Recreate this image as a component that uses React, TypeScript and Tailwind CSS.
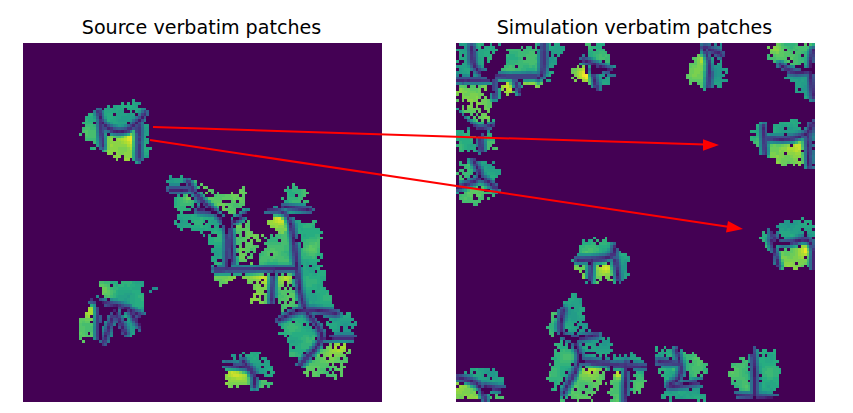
const CELL = 359 / 128;
const FONT = "font-['DejaVu_Sans',sans-serif]";

type Lobe = { pts: number[]; v: number; hot?: number[]; p?: number };
type Group = { ox: number; oy: number; lobes: Lobe[]; veins: number[][] };

const VIRIDIS = [
  [68, 1, 84], [71, 44, 122], [59, 81, 139], [44, 113, 142], [33, 144, 141],
  [39, 173, 129], [92, 200, 99], [170, 220, 50], [253, 231, 37],
];

function viridis(t: number) {
  const x = Math.max(0, Math.min(0.999, t)) * (VIRIDIS.length - 1);
  const i = Math.floor(x);
  const f = x - i;
  const c = VIRIDIS[i].map((a, k) => Math.round(a + (VIRIDIS[i + 1][k] - a) * f));
  return `rgb(${c[0]},${c[1]},${c[2]})`;
}

function hash(i: number, j: number, k: number) {
  const s = Math.sin(i * 127.1 + j * 311.7 + k * 74.7) * 43758.5453;
  return s - Math.floor(s);
}

function inside(x: number, y: number, p: number[]) {
  let hit = false;
  for (let a = 0, b = p.length - 2; a < p.length; b = a, a += 2) {
    if (p[a + 1] > y !== p[b + 1] > y && x < ((p[b] - p[a]) * (y - p[a + 1])) / (p[b + 1] - p[a + 1]) + p[a]) hit = !hit;
  }
  return hit;
}

function lineDist(x: number, y: number, l: number[]) {
  let best = 1e9;
  for (let a = 0; a + 3 < l.length; a += 2) {
    const dx = l[a + 2] - l[a];
    const dy = l[a + 3] - l[a + 1];
    const t = Math.max(0, Math.min(1, ((x - l[a]) * dx + (y - l[a + 1]) * dy) / (dx * dx + dy * dy || 1)));
    best = Math.min(best, Math.hypot(x - l[a] - t * dx, y - l[a + 1] - t * dy));
  }
  return best;
}

// rounds the corners of a vein so it curves like the picture
function smooth(l: number[], rounds = 2) {
  let cur = l;
  for (let r = 0; r < rounds; r++) {
    const next = [cur[0], cur[1]];
    for (let a = 0; a + 3 < cur.length; a += 2) {
      next.push(cur[a] * 0.75 + cur[a + 2] * 0.25, cur[a + 1] * 0.75 + cur[a + 3] * 0.25);
      next.push(cur[a] * 0.25 + cur[a + 2] * 0.75, cur[a + 1] * 0.25 + cur[a + 3] * 0.75);
    }
    next.push(cur[cur.length - 2], cur[cur.length - 1]);
    cur = next;
  }
  return cur;
}

// all coordinates are read off 3x crops, so they get divided by 3 below
const LEFT: Group[] = [
  {
    ox: 70, oy: 90,
    lobes: [
      { pts: [30, 128, 48, 72, 85, 68, 95, 110, 100, 170, 85, 180, 50, 150], v: 0.64 },
      { pts: [85, 65, 150, 38, 212, 38, 225, 72, 205, 100, 170, 118, 130, 118, 100, 100], v: 0.56 },
      { pts: [95, 130, 130, 130, 175, 130, 200, 125, 205, 205, 120, 200, 85, 178], v: 0.78, hot: [190, 150, 24, 0.16], p: 0.02 },
      { pts: [205, 100, 232, 105, 238, 205, 205, 205], v: 0.55 },
    ],
    veins: [[85, 65, 95, 100, 130, 125, 170, 125, 210, 90, 225, 70], [92, 100, 98, 170], [205, 110, 205, 205]],
  },
  {
    ox: 150, oy: 165,
    lobes: [
      { pts: [50, 35, 100, 30, 100, 70, 60, 72], v: 0.52 },
      { pts: [70, 80, 115, 75, 135, 105, 140, 135, 80, 150], v: 0.58, hot: [115, 90, 18, 0.22] },
      { pts: [115, 45, 140, 45, 215, 90, 290, 65, 285, 135, 240, 150, 180, 120, 140, 80], v: 0.72, p: 0.2 },
      { pts: [75, 170, 100, 150, 165, 145, 205, 170, 225, 230, 225, 310, 195, 310, 180, 210, 120, 190, 75, 195], v: 0.58, p: 0.14 },
      { pts: [250, 175, 295, 165, 300, 205, 335, 205, 310, 280, 305, 295, 250, 295, 248, 240], v: 0.72, p: 0.17 },
      { pts: [320, 300, 350, 220, 385, 205, 425, 205, 435, 300, 360, 310], v: 0.66, p: 0.02 },
      { pts: [355, 150, 370, 135, 410, 145, 415, 205, 385, 200, 355, 185], v: 0.76, hot: [400, 155, 18, 0.2] },
      { pts: [400, 115, 410, 65, 460, 65, 480, 135, 410, 135], v: 0.64 },
      { pts: [435, 165, 490, 170, 515, 195, 510, 280, 525, 345, 555, 435, 480, 440, 455, 430, 445, 310, 455, 240], v: 0.58, p: 0.08, hot: [490, 240, 25, 0.12] },
      { pts: [195, 325, 290, 320, 340, 320, 355, 340, 355, 410, 295, 415, 320, 380, 290, 345, 250, 345, 195, 385], v: 0.76, hot: [335, 330, 22, 0.14], p: 0.14 },
      { pts: [385, 325, 435, 325, 440, 420, 400, 440, 385, 415, 375, 400], v: 0.68, hot: [410, 340, 18, 0.2], p: 0.14 },
      { pts: [385, 470, 420, 450, 470, 450, 500, 480, 520, 515, 450, 590, 420, 580, 415, 520, 385, 510], v: 0.6 },
      { pts: [520, 470, 560, 445, 600, 450, 622, 480, 605, 515, 545, 510], v: 0.54, p: 0.14 },
      { pts: [460, 600, 530, 535, 600, 535, 590, 585, 570, 635, 470, 630], v: 0.7, hot: [565, 540, 26, 0.16], p: 0.12 },
      { pts: [228, 580, 280, 565, 320, 560, 375, 605, 365, 640, 310, 610, 270, 590], v: 0.54, p: 0.12 },
      { pts: [228, 610, 290, 610, 305, 635, 305, 665, 228, 665], v: 0.78, hot: [260, 615, 22, 0.1], p: 0.01 },
      { pts: [320, 650, 365, 650, 365, 665, 315, 665], v: 0.68, p: 0.01 },
      { pts: [4, 366, 12, 366, 12, 382, 4, 382], v: 0.45, p: 0 },
      { pts: [13, 185, 21, 185, 21, 192, 13, 192], v: 0.75, p: 0 },
    ],
    veins: [
      [115, 50, 145, 100, 195, 140, 235, 180, 232, 310],
      [145, 135, 195, 140],
      [235, 180, 290, 145],
      [60, 75, 115, 75],
      [195, 315, 440, 312],
      [370, 315, 365, 410],
      [350, 135, 410, 140, 430, 200, 440, 310, 455, 420, 500, 480, 525, 520, 450, 600],
      [385, 465, 455, 430, 560, 445],
      [525, 520, 610, 520],
      [400, 125, 480, 135],
      [240, 175, 248, 290],
      [280, 590, 315, 630, 312, 665],
      [228, 600, 300, 610],
    ],
  },
  {
    ox: 70, oy: 275,
    lobes: [
      { pts: [90, 20, 220, 20, 215, 120, 170, 90, 120, 85, 90, 60], v: 0.58, hot: [100, 40, 22, 0.18], p: 0.04 },
      { pts: [15, 175, 35, 120, 65, 85, 80, 120, 75, 190, 40, 195], v: 0.7, hot: [70, 110, 24, 0.12], p: 0.08 },
      { pts: [100, 210, 115, 130, 130, 125, 125, 190], v: 0.58 },
      { pts: [140, 115, 195, 130, 200, 180, 170, 180], v: 0.54 },
    ],
    veins: [[60, 75, 110, 85, 160, 95, 215, 125], [85, 85, 85, 190], [135, 105, 100, 205], [135, 105, 165, 175], [175, 100, 215, 160]],
  },
];

const RIGHT: Group[] = [
  {
    ox: 450, oy: 40,
    lobes: [
      { pts: [18, 10, 60, 10, 65, 90, 85, 120, 18, 120], v: 0.55, p: 0.14 },
      { pts: [85, 10, 150, 10, 120, 70, 80, 90, 65, 50], v: 0.58, p: 0.12 },
      { pts: [180, 25, 270, 10, 280, 60, 260, 110, 150, 110], v: 0.64, p: 0.08 },
      { pts: [290, 10, 355, 10, 310, 80, 300, 125, 280, 100], v: 0.54, p: 0.06 },
      { pts: [18, 125, 115, 125, 100, 160, 50, 185, 18, 185], v: 0.76, p: 0.18 },
      { pts: [135, 125, 195, 125, 200, 160, 150, 165], v: 0.76, hot: [180, 140, 16, 0.2], p: 0.15 },
      { pts: [225, 125, 280, 125, 255, 140, 225, 140], v: 0.76 },
      { pts: [420, 10, 460, 10, 490, 80, 400, 60], v: 0.62, p: 0.06 },
      { pts: [365, 80, 405, 80, 430, 135, 385, 125, 365, 110], v: 0.76, hot: [410, 105, 16, 0.18] },
      { pts: [445, 105, 490, 110, 475, 135, 445, 145], v: 0.54 },
      { pts: [30, 205, 80, 170, 130, 170, 120, 230, 130, 255, 90, 260, 50, 220], v: 0.74, p: 0.28 },
      { pts: [18, 260, 60, 280, 90, 330, 20, 335], v: 0.6, p: 0.06 },
      { pts: [100, 290, 135, 280, 135, 330, 100, 330], v: 0.64, p: 0.08 },
      { pts: [30, 370, 70, 365, 70, 410, 40, 425, 18, 410], v: 0.64, p: 0.14 },
      { pts: [95, 365, 130, 365, 150, 400, 130, 430, 100, 400], v: 0.54, p: 0.05 },
      { pts: [20, 450, 70, 420, 130, 450, 150, 455, 75, 495, 25, 485], v: 0.68, p: 0.16 },
    ],
    veins: [
      [65, 20, 70, 90, 130, 110, 260, 110],
      [280, 15, 280, 100, 265, 115],
      [18, 122, 120, 120],
      [135, 115, 135, 170],
      [195, 125, 210, 160],
      [400, 60, 490, 95],
      [425, 90, 440, 145],
      [18, 220, 80, 270, 130, 255],
      [90, 270, 95, 330],
      [70, 360, 95, 410, 75, 425, 18, 445],
      [90, 410, 140, 445],
    ],
  },
  {
    ox: 650, oy: 40,
    lobes: [
      { pts: [110, 120, 130, 50, 160, 35, 180, 60, 170, 140, 130, 130], v: 0.72, hot: [165, 60, 18, 0.16], p: 0.07 },
      { pts: [200, 60, 225, 70, 225, 130, 195, 150, 190, 100], v: 0.52 },
      { pts: [160, 10, 220, 10, 215, 40, 170, 30], v: 0.46 },
      { pts: [365, 15, 430, 10, 495, 10, 480, 70, 420, 85, 380, 70, 355, 60], v: 0.66, hot: [375, 30, 18, 0.13], p: 0.06 },
      { pts: [410, 110, 440, 100, 490, 110, 490, 178, 460, 170], v: 0.54, p: 0.07 },
      { pts: [305, 290, 320, 260, 340, 260, 350, 300, 345, 340, 320, 325], v: 0.64, p: 0.03 },
      { pts: [355, 255, 410, 240, 450, 240, 465, 270, 430, 290, 370, 290], v: 0.56, p: 0.04 },
      { pts: [355, 310, 400, 305, 465, 295, 470, 350, 460, 378, 400, 378, 360, 350], v: 0.77, hot: [452, 320, 18, 0.14], p: 0.03 },
      { pts: [475, 260, 495, 250, 495, 380, 480, 378], v: 0.4 },
      { pts: [325, 600, 340, 570, 365, 590, 355, 635], v: 0.62, p: 0.05 },
      { pts: [385, 550, 430, 540, 495, 540, 495, 590, 440, 600, 385, 590], v: 0.54, p: 0.06 },
      { pts: [380, 630, 460, 615, 490, 610, 485, 680, 400, 685, 380, 660], v: 0.77, hot: [475, 630, 16, 0.16], p: 0.04 },
    ],
    veins: [
      [160, 25, 180, 60, 175, 140],
      [165, 22, 215, 45],
      [390, 75, 430, 100, 495, 90],
      [490, 30, 480, 80, 490, 170],
      [340, 260, 345, 340],
      [350, 295, 420, 300, 475, 280, 490, 250],
      [470, 280, 475, 378],
      [365, 560, 370, 600, 400, 615, 490, 590, 490, 700],
      [365, 600, 385, 680],
    ],
  },
  {
    ox: 450, oy: 230,
    lobes: [
      { pts: [380, 60, 400, 30, 470, 30, 495, 55, 470, 80, 385, 85], v: 0.58, hot: [430, 65, 25, 0.08], p: 0.05 },
      { pts: [365, 100, 405, 100, 410, 150, 385, 125], v: 0.78, p: 0.06 },
      { pts: [430, 100, 490, 100, 490, 155, 430, 155], v: 0.75, hot: [470, 115, 16, 0.12], p: 0.06 },
      { pts: [505, 55, 535, 75, 535, 145, 505, 150], v: 0.54, p: 0.08 },
      { pts: [330, 240, 365, 190, 395, 200, 415, 300, 370, 310, 340, 300], v: 0.54, p: 0.1 },
      { pts: [295, 290, 310, 250, 325, 300, 305, 320], v: 0.66 },
      { pts: [385, 345, 430, 315, 480, 325, 490, 350, 470, 395, 420, 390], v: 0.54, p: 0.1 },
      { pts: [320, 335, 350, 340, 380, 385, 350, 435, 320, 480, 290, 450], v: 0.62, p: 0.03 },
      { pts: [340, 480, 390, 410, 470, 410, 465, 455, 420, 510, 340, 510], v: 0.7, hot: [430, 415, 24, 0.14], p: 0.12 },
      { pts: [490, 385, 550, 370, 590, 400, 490, 400], v: 0.54, p: 0.06 },
      { pts: [490, 430, 525, 420, 520, 510, 475, 510], v: 0.68, hot: [510, 430, 14, 0.2], p: 0.05 },
      { pts: [550, 430, 590, 430, 570, 490, 540, 490], v: 0.66, p: 0.05 },
      { pts: [620, 350, 670, 360, 690, 400, 700, 450, 640, 465, 625, 400], v: 0.58, hot: [680, 405, 14, 0.2], p: 0.06 },
      { pts: [690, 370, 740, 365, 775, 420, 720, 450, 705, 430], v: 0.62, hot: [745, 385, 18, 0.12], p: 0.03 },
      { pts: [640, 480, 750, 470, 765, 510, 640, 510], v: 0.56, p: 0.12 },
      { pts: [840, 440, 850, 395, 900, 380, 905, 500, 870, 495], v: 0.66, p: 0.03 },
      { pts: [925, 350, 975, 365, 990, 420, 975, 490, 925, 500, 925, 430], v: 0.6, p: 0.05 },
      { pts: [18, 455, 65, 415, 130, 410, 165, 460, 140, 470, 100, 460], v: 0.54, p: 0.08 },
      { pts: [18, 460, 80, 460, 95, 510, 18, 510], v: 0.78, p: 0.01 },
      { pts: [105, 500, 155, 495, 155, 510, 105, 510], v: 0.7 },
      { pts: [18, 245, 23, 245, 23, 262, 18, 262], v: 0.45, p: 0 },
    ],
    veins: [
      [905, 340, 915, 420, 915, 510],
      [850, 495, 915, 500, 985, 505],
      [340, 240, 325, 310, 370, 330, 440, 315],
      [375, 340, 395, 390, 340, 490],
      [395, 395, 475, 400],
      [530, 400, 525, 510],
      [480, 405, 590, 410],
      [625, 395, 690, 400],
      [680, 360, 700, 440, 640, 475, 755, 455],
      [380, 90, 490, 85, 495, 50],
      [425, 90, 420, 155],
      [495, 90, 505, 150],
      [18, 440, 90, 460, 105, 510],
      [105, 470, 165, 480],
    ],
  },
];

const NEAR = [[4, 0], [-4, 0], [0, 4], [0, -4], [3, 3], [-3, 3], [3, -3], [-3, -3]];

function buildCells(groups: Group[], left: number, top: number, seed: number) {
  const scaled = groups.map((g) => {
    const map = (p: number[]) => p.map((n, k) => (k % 2 === 0 ? g.ox + n / 3 - left : g.oy + n / 3 - top));
    return { lobes: g.lobes.map((l) => ({ ...l, pts: map(l.pts), hot: l.hot && [g.ox + l.hot[0] / 3 - left, g.oy + l.hot[1] / 3 - top, (l.hot[2] / 3) * 1.3, l.hot[3]] })), veins: g.veins.map((v) => smooth(map(v))) };
  });
  const allLobes = scaled.flatMap((g) => g.lobes);
  const allVeins = scaled.flatMap((g) => g.veins);
  const paths = new Map<string, string>();
  for (let j = 0; j < 128; j++) {
    for (let i = 0; i < 128; i++) {
      const x = (i + 0.5) * CELL;
      const y = (j + 0.5) * CELL;
      const jx = x + (hash(i, j, seed) - 0.5) * 5;
      const jy = y + (hash(i, j, seed + 1) - 0.5) * 5;
      let d = 1e9;
      for (const v of allVeins) d = Math.min(d, lineDist(x, y, v));
      let lobe = allLobes.find((l) => inside(jx, jy, l.pts));
      let filled = false;
      if (!lobe && d < 5) {
        // the gap between a lobe and its vein stays painted
        lobe = allLobes.find((l) => NEAR.some(([ax, ay]) => inside(x + ax, y + ay, l.pts)));
        filled = true;
      }
      if (!lobe) continue;
      if (!filled && d > 4 && hash(i, j, seed + 2) < (lobe.p ?? 0.07)) continue;
      let v = lobe.v + 0.03;
      if (lobe.hot) v += lobe.hot[3] * Math.exp(-((x - lobe.hot[0]) ** 2 + (y - lobe.hot[1]) ** 2) / lobe.hot[2] ** 2);
      v += Math.sin(x * 0.17 + seed) * Math.cos(y * 0.21) * 0.045 + (hash(i, j, seed + 3) - 0.5) * 0.02;
      const ramp = Math.min(1, d / 6.5);
      v = 0.07 + (v - 0.07) * ramp;
      const fill = viridis(Math.round(v * 40) / 40);
      paths.set(fill, (paths.get(fill) ?? "") + `M${(i * CELL).toFixed(2)} ${(j * CELL).toFixed(2)}h${CELL.toFixed(2)}v${CELL.toFixed(2)}h-${CELL.toFixed(2)}z`);
    }
  }
  return [...paths.entries()];
}

function Heatmap({ title, cells }: { title: string; cells: [string, string][] }) {
  return (
    <div className="flex w-[359px] flex-col items-center">
      <h2 className={`h-[32px] pr-[2px] text-[19.1px] leading-[34px] text-black ${FONT}`}>{title}</h2>
      <svg width="359" height="359" viewBox="0 0 359 359" className="block bg-[#440154]" shapeRendering="crispEdges">
        {cells.map(([fill, d]) => (
          <path key={fill} d={d} fill={fill} />
        ))}
      </svg>
    </div>
  );
}

const leftCells = buildCells(LEFT, 23, 43, 3);
const rightCells = buildCells(RIGHT, 456, 43, 11);

export default function App() {
  return (
    <div className="relative h-[413px] w-[853px] overflow-hidden bg-white">
      <div className="flex gap-[74px] pl-[23px] pt-[11px]">
        <Heatmap title="Source verbatim patches" cells={leftCells} />
        <Heatmap title="Simulation verbatim patches" cells={rightCells} />
      </div>
      <svg width="853" height="413" viewBox="0 0 853 413" className="absolute left-0 top-0">
        <line x1="153" y1="127" x2="705" y2="144.6" stroke="#ff0000" strokeWidth="2" />
        <polygon points="719,145 703,139.2 703,150.8" fill="#ff0000" />
        <line x1="150" y1="140" x2="728" y2="226.8" stroke="#ff0000" strokeWidth="2" />
        <polygon points="743,229 728,221 726,232.5" fill="#ff0000" />
      </svg>
    </div>
  );
}
